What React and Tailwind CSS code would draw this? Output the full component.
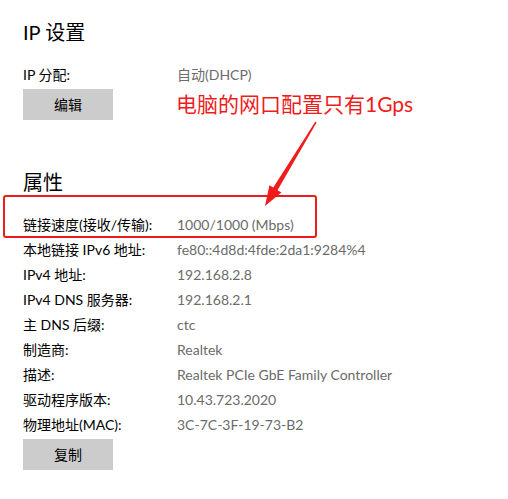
const font = { fontFamily: 'Lato, "Noto Sans CJK SC", sans-serif' };

const ipRows = [{ label: "IP 分配:", value: "自动(DHCP)" }];

const props = [
  { label: "链接速度(接收/传输):", value: "1000/1000 (Mbps)" },
  { label: "本地链接 IPv6 地址:", value: "fe80::4d8d:4fde:2da1:9284%4" },
  { label: "IPv4 地址:", value: "192.168.2.8" },
  { label: "IPv4 DNS 服务器:", value: "192.168.2.1" },
  { label: "主 DNS 后缀:", value: "ctc" },
  { label: "制造商:", value: "Realtek" },
  { label: "描述:", value: "Realtek PCIe GbE Family Controller" },
  { label: "驱动程序版本:", value: "10.43.723.2020" },
  { label: "物理地址(MAC):", value: "3C-7C-3F-19-73-B2" },
];

function Row({ label, value }) {
  return (
    <div className="flex h-[25px] items-center text-[14px]">
      <span className="w-[154px] shrink-0 text-black">{label}</span>
      <span className="text-[#6b6b6b]">{value}</span>
    </div>
  );
}

function Button({ children }) {
  return (
    <button className="mt-[2px] flex h-[31px] w-[90px] items-center justify-center bg-[#cccccc] text-[14px] text-black">
      {children}
    </button>
  );
}

function Annotation() {
  return (
    <>
      <div
        className="absolute left-[176px] top-[89px] text-[21px] leading-[30px] text-[#f01c1c]"
        style={font}
      >
        电脑的网口配置只有1Gps
      </div>
      <svg className="absolute left-0 top-0" width="508" height="499">
        <polygon
          points="316.6,122.4 277.5,190.2 281.4,192.5 265,206 269.4,185.3 273.3,187.6 315.4,121.6"
          fill="#f01c1c"
        />
      </svg>
      <div className="absolute left-[3px] top-[195px] h-[43px] w-[314px] rounded-[3px] border-2 border-[#ec1c1c]" />
    </>
  );
}

export default function App() {
  return (
    <div className="relative h-[499px] w-[508px] overflow-hidden bg-white" style={font}>
      <div className="flex flex-col items-start pl-[23px]">
        <h2 className="mt-[18px] h-[28px] text-[20px] leading-[28px] text-black">IP 设置</h2>
        <div className="mt-[16px] w-full">
          {ipRows.map((r) => (
            <Row key={r.label} {...r} />
          ))}
        </div>
        <Button>编辑</Button>

        <h2 className="mt-[48px] h-[28px] text-[20px] leading-[28px] text-black">属性</h2>
        <div className="mt-[16px] w-full">
          {props.map((r) => (
            <Row key={r.label} {...r} />
          ))}
        </div>
        <Button>复制</Button>
      </div>
      <Annotation />
    </div>
  );
}
